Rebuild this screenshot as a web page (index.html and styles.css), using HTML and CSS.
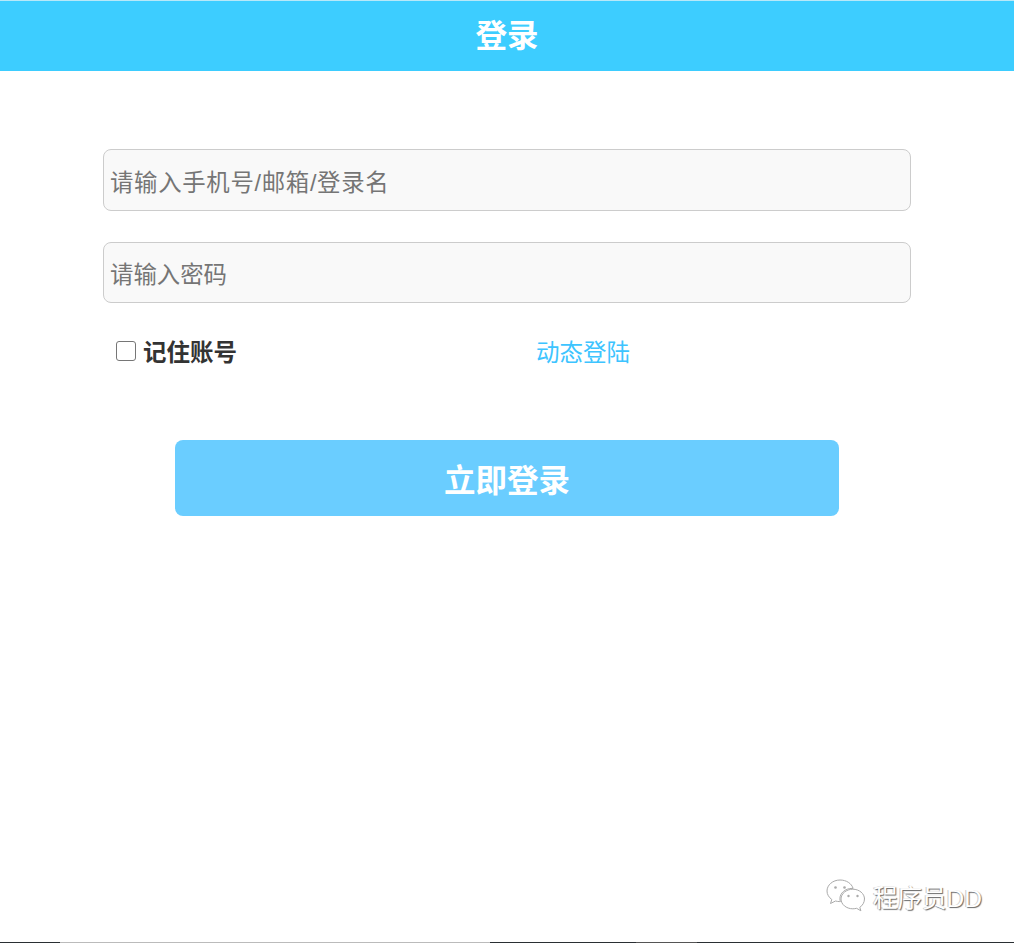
FILE: index.html
```html
<!DOCTYPE html>
<html lang="zh">
<head>
<meta charset="utf-8">
<title>登录</title>
<link rel="stylesheet" href="styles.css">
</head>
<body>
<div class="page">
  <div class="top-line"></div>
  <header class="header">登录</header>
  <form class="form">
    <input class="field field-account" type="text" placeholder="请输入手机号/邮箱/登录名">
    <input class="field" type="password" placeholder="请输入密码">
    <div class="options">
      <label class="remember"><span class="box"></span>记住账号</label>
      <a class="dynamic">动态登陆</a>
    </div>
    <button class="submit" type="button">立即登录</button>
  </form>
  <div class="spacer"></div>
  <div class="mark">
    <svg class="wechat" width="41" height="37" viewBox="0 0 41 37" fill="#fff" stroke="#aaa" stroke-width="1">
      <path d="M15 2C7.800 2 2 7 2 13c0 3.400 1.900 6.400 4.800 8.500L5.500 25.500l5-2.500c1.300.4 2.800.6 4.300.6h.6c-.3-1-.5-1.900-.5-2.900 0-5.700 5.500-10.300 12.100-10.300h1.100C26.600 5.400 21.300 2 15 2z"/>
      <path d="M39.500 21c0-5.400-5.300-9.800-11.700-9.800S16 15.600 16 21s5.300 9.800 11.800 9.800c1.300 0 2.600-.2 3.800-.5l4.300 2.500-1.100-3.500c2.900-1.900 4.700-4.900 4.700-8.800z"/>
      <circle cx="10.500" cy="9.500" r="1.300" fill="#aaa" stroke="none"/><circle cx="19.500" cy="9.500" r="1.300" fill="#aaa" stroke="none"/>
      <circle cx="23.500" cy="18" r="1.200" fill="#aaa" stroke="none"/><circle cx="32.500" cy="18" r="1.200" fill="#aaa" stroke="none"/>
    </svg>
    <span class="mark-text">程序员DD</span>
  </div>
  <div class="bottom-line"></div>
</div>
</body>
</html>
```
FILE: styles.css
```css
* { box-sizing: border-box; }
html, body { margin: 0; height: 100%; }
body { background: #fff; font-family: "Liberation Sans", "Noto Sans CJK SC", sans-serif; }
.page { height: 943px; display: flex; flex-direction: column; overflow: hidden; }
.top-line { height: 1px; background: #b8e8f8; }
.header { height: 70px; padding-bottom: 7px; background: #3dcdff; color: #fff; font-size: 31.500px; font-weight: 700; display: flex; align-items: center; justify-content: center; }
.form { display: flex; flex-direction: column; padding: 78px 103px 0; }
.field { height: 62px; border: 1px solid #ccc; border-radius: 8px; background: #f9f9f9; padding: 7px 6px 0; font-size: 23.400px; font-family: inherit; outline: none; }
.field-account { letter-spacing: .7px; }
.field + .field { margin-top: 31px; height: 61px; padding-top: 6px; }
.field::placeholder { color: #757575; opacity: 1; }
.options { display: flex; align-items: center; height: 50px; margin-top: 24px; padding-left: 13px; font-size: 23.500px; }
.remember { display: flex; align-items: center; width: 420px; font-weight: 700; color: #333; }
.box { width: 20px; height: 20px; border: 1px solid #767676; border-radius: 3px; background: #fff; margin: 0 7px 0 0; position: relative; top: 0; }
.dynamic { color: #3dc4ff; margin-left: 0; }
.options > * { padding-bottom: 2px; }
.submit { align-self: center; margin-top: 63px; padding-bottom: 2px; width: 664px; height: 76px; border: 0; border-radius: 8px; background: #6acdff; color: #fff; font-size: 31.500px; font-weight: 700; font-family: inherit; }
.spacer { flex: 1; }
.mark { align-self: flex-end; display: flex; align-items: center; gap: 7px; margin: 0 32px 27px 0; }
.mark-text { font-size: 24.500px; font-weight: 400; color: #fff; text-shadow: 1px 1px 1px #666, -1px 0 0 #ccc; }
.bottom-line { height: 1px; background: linear-gradient(to right, #2a2f33 0 60px, #bbb 60px 490px, #2a2f33 490px 636px, #555 636px 697px, #2a2f33 697px); }
```
